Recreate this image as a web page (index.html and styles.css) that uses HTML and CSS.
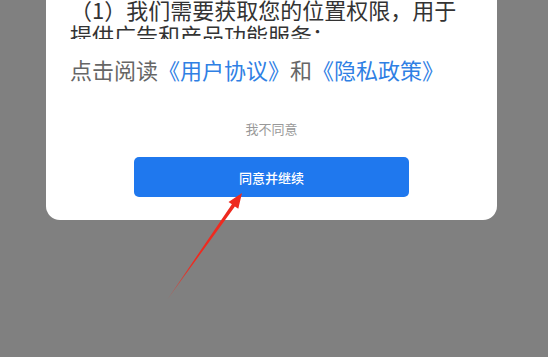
FILE: index.html
```html
<!DOCTYPE html>
<html lang="zh-CN">
<head>
<meta charset="utf-8">
<title>隐私政策</title>
<link rel="stylesheet" href="styles.css">
</head>
<body>
<div class="screen">
  <div class="card">
    <div class="scroll">
      <p class="body-text">（1）我们需要获取您的位置权限，用于提供广告和产品功能服务；</p>
    </div>
    <p class="read">点击阅读<a class="link">《用户协议》</a>和<a class="link">《隐私政策》</a></p>
    <div class="disagree">我不同意</div>
    <div class="agree">同意并继续</div>
  </div>
  <svg class="arrow" width="548" height="357" viewBox="0 0 548 357">
    <defs>
      <linearGradient id="fade" x1="167" y1="300" x2="242" y2="193" gradientUnits="userSpaceOnUse">
        <stop offset="0" stop-color="#ee2a1f" stop-opacity="0.35"/>
        <stop offset="0.35" stop-color="#ee2a1f" stop-opacity="1"/>
        <stop offset="1" stop-color="#ee2a1f" stop-opacity="1"/>
      </linearGradient>
    </defs>
    <polygon points="167,300 231.9,204.2 228.5,201.9 242,193 238.3,208.7 234.9,206.4" fill="url(#fade)"/>
  </svg>
</div>
</body>
</html>
```

FILE: styles.css
```css
html, body {
  margin: 0;
  padding: 0;
}
body {
  background: #808080;
  font-family: "Noto Sans CJK SC", "Noto Sans", sans-serif;
}
.screen {
  position: relative;
  width: 548px;
  height: 357px;
  overflow: hidden;
}
.card {
  margin-left: 46px;
  width: 451px;
  box-sizing: border-box;
  background: #fff;
  border-radius: 0 0 14px 14px;
  padding: 0 24px 23px;
  display: flex;
  flex-direction: column;
  align-items: stretch;
}
.scroll {
  height: 39px;
  overflow: hidden;
}
.body-text {
  margin: -3px 0 0;
  font-size: 22px;
  line-height: 25px;
  color: #333;
}
.read {
  margin: 15px 0 0;
  font-size: 22px;
  line-height: 30px;
  color: #666;
}
.link {
  color: #2f80e4;
}
.disagree {
  margin-top: 36px;
  text-align: center;
  font-size: 13px;
  line-height: 18px;
  color: #999;
}
.agree {
  align-self: center;
  margin-top: 19px;
  width: 275px;
  height: 40px;
  border-radius: 5px;
  background: #1f78ee;
  color: #fff;
  font-size: 13px;
  font-weight: 500;
  display: flex;
  align-items: center;
  justify-content: center;
}
.arrow {
  position: absolute;
  left: 0;
  top: 0;
  pointer-events: none;
}
```
